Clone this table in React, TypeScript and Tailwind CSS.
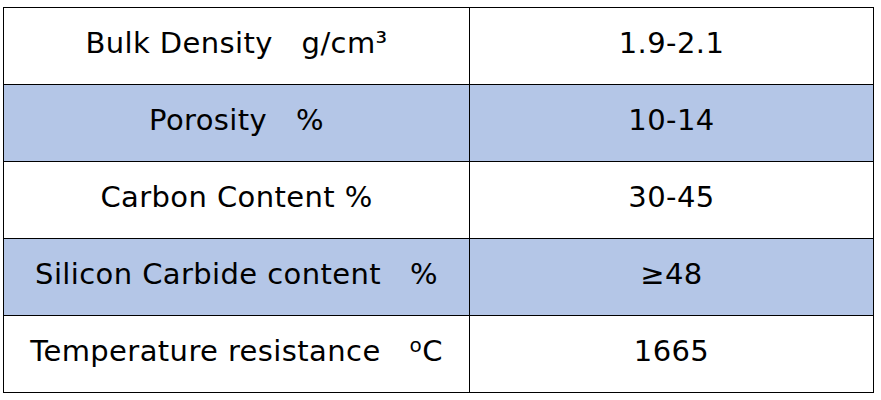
import React from "react";

const rows: { label: React.ReactNode; value: string; shaded: boolean }[] = [
  { label: "Bulk Density\u00a0\u00a0 g/cm³", value: "1.9-2.1", shaded: false },
  { label: "Porosity\u00a0\u00a0 %", value: "10-14", shaded: true },
  { label: "Carbon Content %", value: "30-45", shaded: false },
  { label: "Silicon Carbide content\u00a0\u00a0 %", value: "≥48", shaded: true },
  {
    label: (
      <>
        Temperature resistance{"\u00a0\u00a0 "}
        <span className="relative -top-[9px] text-[20px]">o</span>C
      </>
    ),
    value: "1665",
    shaded: false,
  },
];

export default function App() {
  return (
    <div className="w-[881px] h-[400px] bg-white pt-[7px] pl-[3px]">
      <table
        className="border-collapse w-[871px] text-[29px] tracking-[0.4px] text-black"
        style={{ fontFamily: '"DejaVu Sans", Verdana, sans-serif' }}
      >
        <tbody>
          {rows.map((r) => (
            <tr key={r.value} className={r.shaded ? "bg-[#b4c6e7]" : "bg-white"}>
              <td className="w-[466px] h-[77px] border border-black text-center align-middle p-0 pb-[5px]">
                {r.label}
              </td>
              <td className="h-[77px] border border-black text-center align-middle p-0 pb-[5px]">
                {r.value}
              </td>
            </tr>
          ))}
        </tbody>
      </table>
    </div>
  );
}
